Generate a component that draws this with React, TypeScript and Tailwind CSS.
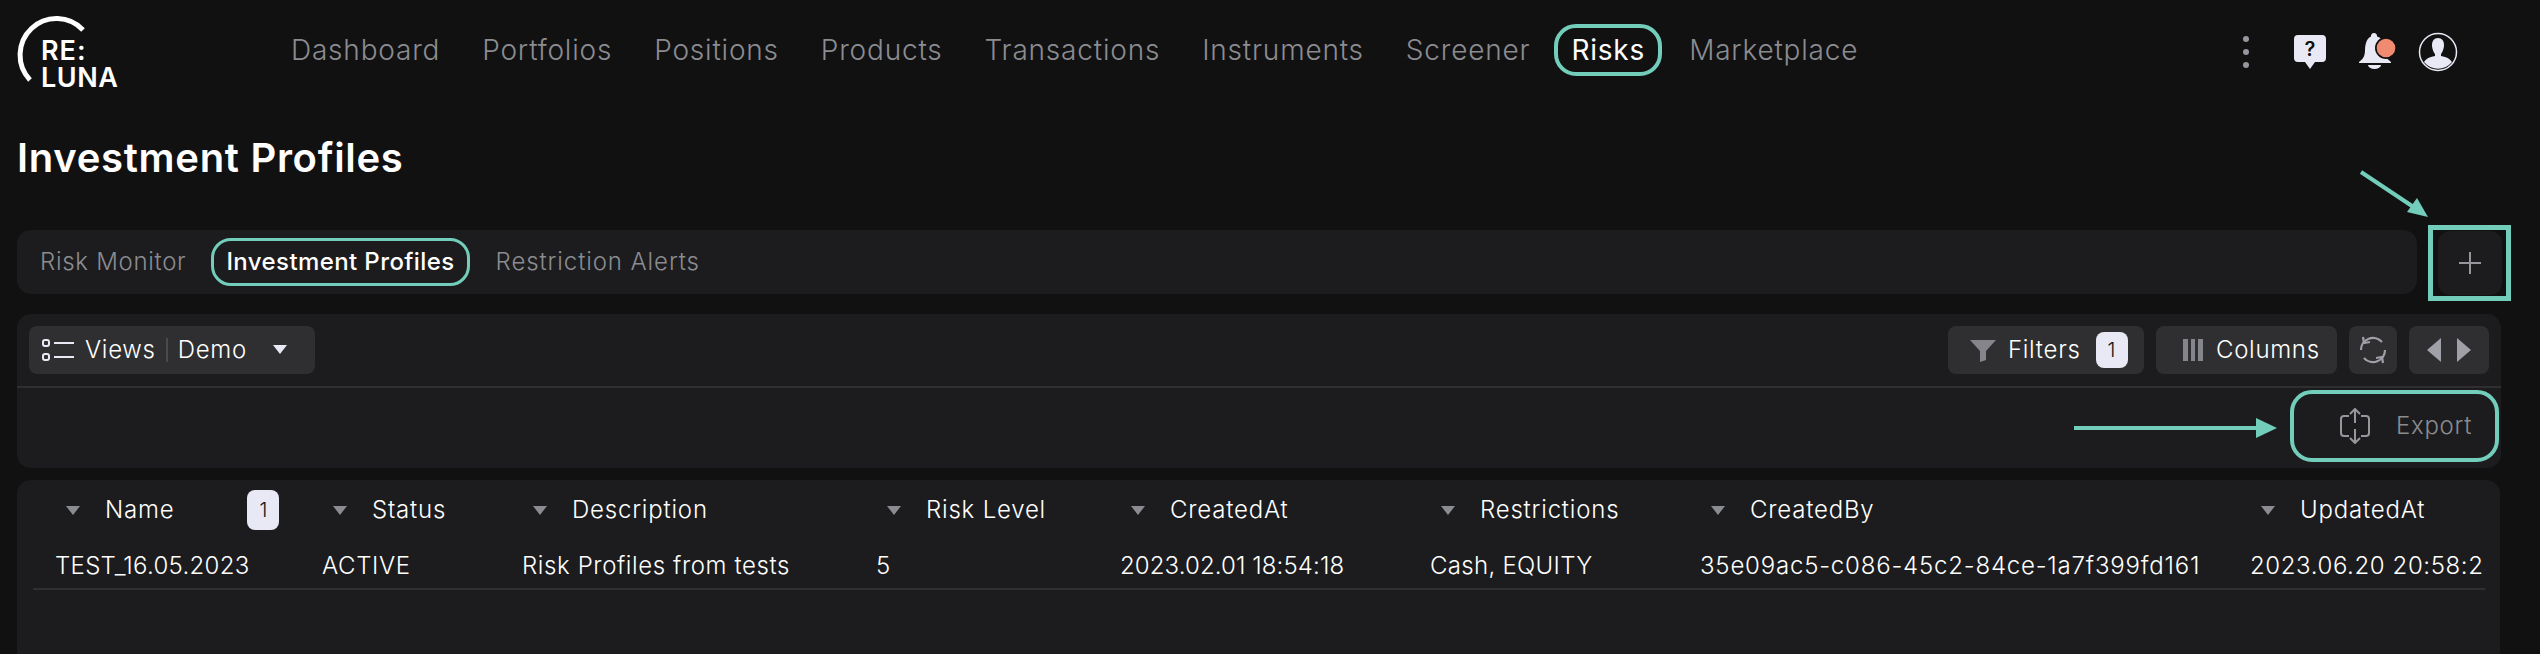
import type { ReactNode } from 'react'

function Logo() {
  return (
    <div className="relative w-[120px] h-[76px] flex-none">
      <svg width="80" height="76" viewBox="0 0 80 76" className="absolute left-0 top-0">
        <path d="M66 18 A36 36 0 1 0 13 68" fill="none" stroke="#fff" strokeWidth="5" />
      </svg>
      <div className="absolute left-[24px] top-[25px] text-[27px] leading-[27px] font-semibold text-white">
        <div className="tracking-[1px]">RE:</div>
        <div className="tracking-[0.5px]">LUNA</div>
      </div>
    </div>
  )
}

function NavItem({ children, active }: { children: ReactNode; active?: boolean }) {
  if (active) {
    return (
      <div className="-ml-[18px] -mr-[15px] h-[52px] px-[13px] flex items-center rounded-[22px] border-[4px] border-[#72cdbb] text-white font-normal">
        {children}
      </div>
    )
  }
  return <div className="text-[#8b8c91] font-light">{children}</div>
}

function Header() {
  return (
    <div className="h-[100px] flex items-center pl-[17px] pr-[82px]">
      <Logo />
      <nav className="ml-[154px] flex items-center gap-[42px] text-[28px] tracking-[0.8px] flex-1">
        <NavItem>Dashboard</NavItem>
        <NavItem>Portfolios</NavItem>
        <NavItem>Positions</NavItem>
        <NavItem>Products</NavItem>
        <NavItem>Transactions</NavItem>
        <NavItem>Instruments</NavItem>
        <NavItem>Screener</NavItem>
        <NavItem active>Risks</NavItem>
        <NavItem>Marketplace</NavItem>
      </nav>
      <div className="flex items-center mt-[4px]">
        <svg width="8" height="34" viewBox="0 0 8 34" className="mr-[44px]">
          <circle cx="4" cy="4" r="3" fill="#96979c" />
          <circle cx="4" cy="17" r="3" fill="#96979c" />
          <circle cx="4" cy="30" r="3" fill="#96979c" />
        </svg>
        <div className="relative w-[32px] h-[34px] mr-[32px]">
          <svg width="32" height="34" viewBox="0 0 32 34" className="absolute inset-0">
            <path d="M4 0h24a4 4 0 0 1 4 4v19a4 4 0 0 1-4 4h-7l-5 7-5-7H4a4 4 0 0 1-4-4V4a4 4 0 0 1 4-4z" fill="#e8e9f5" />
          </svg>
          <span className="absolute inset-x-0 top-0 text-center text-[20px] leading-[28px] font-semibold text-[#111112]">?</span>
        </div>
        <svg width="38" height="38" viewBox="0 0 38 38" className="mr-[22px]">
          <path d="M16 0a3 3 0 0 1 3 3.500C25 5 27 11 27 17c0 6 2 9 6 12v1H1v-1c4-3 6-6 6-12 0-6 2-12 6-13.500A3 3 0 0 1 16 0z" fill="#e8e9f5" />
          <path d="M10 32h13a6.500 4 0 0 1-13 0z" fill="#e8e9f5" />
          <circle cx="28" cy="15" r="11" fill="#111112" />
          <circle cx="28" cy="15" r="9.300" fill="#f08a70" />
        </svg>
        <svg width="40" height="40" viewBox="0 0 40 40">
          <circle cx="20" cy="20" r="18.500" fill="none" stroke="#e8e9f5" strokeWidth="1.500" />
          <path d="M20 6c4 0 6 3 6 7 0 4-2 8-3 9v2c6 1 9 3 11 6a18 18 0 0 1-28 0c2-3 5-5 11-6v-2c-1-1-3-5-3-9 0-4 2-7 6-7z" fill="#e8e9f5" />
        </svg>
      </div>
    </div>
  )
}

function Tabs() {
  return (
    <div className="flex items-start h-[64px] pl-[17px]">
      <div className="w-[2400px] h-[64px] rounded-[14px] bg-[#1c1c1e] flex items-center pl-[23px] text-[24px] tracking-[0.7px]">
        <span className="text-[#8b8c91] font-light">Risk Monitor</span>
        <span className="ml-[25px] h-[48px] px-[12px] rounded-[20px] border-[3px] border-[#72cdbb] flex items-center text-white font-medium tracking-[0.4px]">
          Investment Profiles
        </span>
        <span className="ml-[26px] text-[#8b8c91] font-light tracking-[0.9px]">Restriction Alerts</span>
      </div>
      <div className="ml-[11px] relative">
        <div className="w-[83px] h-[76px] border-[5px] border-[#72cdbb] flex items-center justify-center -mt-[5px]">
          <div className="w-[64px] h-[64px] rounded-[12px] bg-[#1c1c1e] flex items-center justify-center">
            <svg width="24" height="24" viewBox="0 0 24 24">
              <path d="M12 1v22M1 12h22" stroke="#96979c" strokeWidth="2" />
            </svg>
          </div>
        </div>
        {/* callout arrow */}
        <svg width="80" height="60" viewBox="0 0 80 60" className="absolute left-[-72px] top-[-64px]">
          <path d="M5 6 L56 40" stroke="#72cdbb" strokeWidth="4" />
          <path d="M72 51 L51 46 L61 32z" fill="#72cdbb" />
        </svg>
      </div>
    </div>
  )
}

function Chip({ className, children }: { className: string; children: ReactNode }) {
  return (
    <div className={`h-[48px] rounded-[8px] bg-[#2f2f32] flex items-center ${className}`}>
      {children}
    </div>
  )
}

function Badge({ className }: { className: string }) {
  return (
    <span className={`rounded-[8px] bg-[#e8e9f5] text-[#111112] flex items-center justify-center text-[20px] tracking-normal ${className}`}>
      1
    </span>
  )
}

function Toolbar() {
  return (
    <div className="ml-[17px] mt-[20px] w-[2484px] h-[154px] rounded-[14px] bg-[#1c1c1e] text-[24px] tracking-[0.7px] font-light">
      <div className="h-[74px] px-[12px] flex items-center justify-between border-b-[2px] border-[#2f2f32]">
        <Chip className="w-[286px] pl-[13px]">
          <svg width="32" height="24" viewBox="0 0 32 24" className="mr-[11px]">
            <rect x="1" y="2" width="6" height="6" rx="2" fill="none" stroke="#e8e9f5" strokeWidth="2" />
            <rect x="1" y="16" width="6" height="6" rx="2" fill="none" stroke="#e8e9f5" strokeWidth="2" />
            <path d="M12 5h20M12 19h20" stroke="#e8e9f5" strokeWidth="2" />
          </svg>
          <span className="text-white">Views</span>
          <span className="mx-[10px] w-[2px] h-[24px] bg-[#4a4a4e]" />
          <span className="text-white">Demo</span>
          <svg width="14" height="10" viewBox="0 0 14 10" className="ml-[26px]">
            <path d="M0 0h14L7 9z" fill="#e8e9f5" />
          </svg>
        </Chip>
        <div className="flex items-center gap-[12px]">
          <Chip className="w-[196px] pl-[22px]">
            <svg width="26" height="24" viewBox="0 0 26 24" className="mr-[12px]">
              <path d="M0 2h26L16 13v9l-6 2V13z" fill="#85868b" />
            </svg>
            <span className="text-white">Filters</span>
            <Badge className="ml-[15px] w-[32px] h-[36px]" />
          </Chip>
          <Chip className="w-[181px] pl-[27px]">
            <svg width="20" height="22" viewBox="0 0 20 22" className="mr-[13px]">
              <path d="M0 0h5v22H0zM8 0h4v22H8zM15 0h5v22h-5z" fill="#85868b" />
            </svg>
            <span className="text-white">Columns</span>
          </Chip>
          <Chip className="w-[48px] justify-center">
            <svg width="28" height="28" viewBox="0 0 28 28" fill="none" stroke="#a0a1a8" strokeWidth="2.200">
              <path d="M2 14A12 12 0 0 1 23 6" />
              <path d="M4 1l1 6 6-1" />
              <path d="M26 14A12 12 0 0 1 5 22" />
              <path d="M24 27l-1-6-6 1" />
            </svg>
          </Chip>
          <Chip className="w-[80px] justify-center gap-[16px]">
            <svg width="14" height="24" viewBox="0 0 14 24"><path d="M14 0v24L0 12z" fill="#a0a1a8" /></svg>
            <svg width="14" height="24" viewBox="0 0 14 24"><path d="M0 0v24l14-12z" fill="#a0a1a8" /></svg>
          </Chip>
        </div>
      </div>
      <div className="h-[80px] flex items-start justify-end pr-[2px] pt-[2px]">
        <svg width="204" height="20" viewBox="0 0 204 20" className="mt-[28px] mr-[12px]">
          <path d="M0 10h184" stroke="#72cdbb" strokeWidth="4" />
          <path d="M182 0l21 10-21 10z" fill="#72cdbb" />
        </svg>
        <div className="w-[209px] h-[72px] rounded-[22px] border-[4px] border-[#72cdbb] flex items-center pl-[46px] text-[#8b8c91]">
          <svg width="30" height="36" viewBox="0 0 30 36" fill="none" stroke="#96979c" strokeWidth="2" className="mr-[26px] flex-none">
            <path d="M9 8H4a3 3 0 0 0-3 3v14a3 3 0 0 0 3 3h5M21 8h5a3 3 0 0 1 3 3v14a3 3 0 0 1-3 3h-5" />
            <path d="M15 15V2M10 6l5-5 5 5M15 21v13M10 30l5 5 5-5" />
          </svg>
          Export
        </div>
      </div>
    </div>
  )
}

const columns = [
  { name: 'Name', value: 'TEST_16.05.2023', width: 267, badge: true, valueClass: 'tracking-[0.3px]' },
  { name: 'Status', value: 'ACTIVE', width: 200, valueClass: 'tracking-[0.6px]' },
  { name: 'Description', value: 'Risk Profiles from tests', width: 354, valueClass: 'tracking-[0.6px]' },
  { name: 'Risk Level', value: '5', width: 244, valueClass: '' },
  { name: 'CreatedAt', value: '2023.02.01 18:54:18', width: 310, valueClass: 'tracking-[0.1px]' },
  { name: 'Restrictions', value: 'Cash, EQUITY', width: 270, valueClass: 'tracking-[0.3px]' },
  { name: 'CreatedBy', value: '35e09ac5-c086-45c2-84ce-1a7f399fd161', width: 550, valueClass: 'tracking-[0.8px]' },
  { name: 'UpdatedAt', value: '2023.06.20 20:58:23', width: 300, valueClass: 'tracking-[0.6px]' },
]

function Table() {
  return (
    <div className="ml-[17px] mt-[12px] w-[2483px] h-[174px] rounded-t-[14px] bg-[#1c1c1e] pl-[16px] pr-[15px] text-[24px] font-light text-white overflow-hidden">
      <div className="flex h-[50px] items-end tracking-[0.8px]">
        {columns.map((c) => (
          <div key={c.name} className="flex-none h-[40px] flex items-center whitespace-nowrap pl-[33px]" style={{ width: c.width }}>
            <svg width="14" height="9" viewBox="0 0 14 9" className="mr-[25px] flex-none">
              <path d="M0 0h14L7 9z" fill="#8b8c91" />
            </svg>
            {c.name}
            {c.badge && <Badge className="ml-[73px] w-[32px] h-[40px] flex-none" />}
          </div>
        ))}
      </div>
      <div className="flex h-[60px] pt-[14px] items-center border-b-[2px] border-[#2f2f32] overflow-hidden">
        {columns.map((c) => (
          <div key={c.name} className={`flex-none whitespace-nowrap pl-[22px] ${c.valueClass}`} style={{ width: c.width }}>
            {c.value}
          </div>
        ))}
      </div>
    </div>
  )
}

export default function App() {
  return (
    <div className="w-[2540px] h-[654px] overflow-hidden bg-[#111112] font-['Inter','Noto_Sans',sans-serif]">
      <Header />
      <div className="h-[130px] pl-[17px] pt-[34px] text-[40px] leading-[48px] tracking-[0.7px] font-semibold text-white">
        Investment Profiles
      </div>
      <Tabs />
      <Toolbar />
      <Table />
    </div>
  )
}
